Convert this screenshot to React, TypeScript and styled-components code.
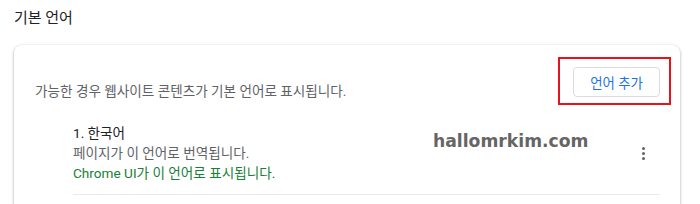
import React from 'react';
import styled, { createGlobalStyle } from 'styled-components';

const GlobalStyle = createGlobalStyle`
	html, body {
		margin: 0;
		padding: 0;
		background: #fff;
		font-family: Roboto, "Noto Sans CJK KR", sans-serif;
	}
`;

const Page = styled.div`
	width: 700px;
	height: 204px;
	overflow: hidden;
`;

const Heading = styled.h2`
	margin: 0;
	padding: 8px 14px 0;
	font-size: 15px;
	line-height: 20px;
	font-weight: 400;
	color: #202124;
`;

const Card = styled.section`
	position: relative;
	margin: 17px 0 0 14px;
	width: 666px;
	height: 200px;
	padding: 22px 20px 0 21px;
	box-sizing: border-box;
	background: #fff;
	border-radius: 8px;
	box-shadow: 0 1px 2px rgba(60, 64, 67, 0.3), 0 1px 3px 1px rgba(60, 64, 67, 0.15);
`;

const HeaderRow = styled.div`
	display: flex;
	align-items: flex-start;
	justify-content: space-between;
`;

const Description = styled.p`
	margin: 14px 0 0;
	font-size: 13.6px;
	line-height: 20px;
	color: #5f6368;
`;

const ButtonWrap = styled.div`
	position: relative;
`;

const Highlight = styled.div`
	position: absolute;
	top: -10px;
	left: -15px;
	right: -11px;
	bottom: -8px;
	border: 2px solid #e8121b;
	pointer-events: none;
`;

const AddButton = styled.button`
	width: 87px;
	height: 30px;
	border: 1px solid #dadce0;
	border-radius: 4px;
	background: #fff;
	color: #1a73e8;
	font-family: Roboto, "Noto Sans CJK KR", sans-serif;
	font-size: 13.4px;
	padding: 0;
`;

const LanguageItem = styled.div`
	display: flex;
	align-items: center;
	margin: 22px 0 0 38px;
	padding-bottom: 11px;
	border-bottom: 1px solid #e8eaed;
`;

const LanguageText = styled.div`
	flex: 1;
	font-size: 13.6px;
	line-height: 20px;
`;

const Line = styled.div<{ $tone?: 'main' | 'sub' | 'ok' }>`
	color: ${({ $tone }) =>
		$tone === 'ok' ? '#188038' : $tone === 'sub' ? '#5f6368' : '#202124'};
`;

const MoreButton = styled.div`
	width: 20px;
	display: flex;
	flex-direction: column;
	align-items: center;
	gap: 2px;
	margin-right: 7px;

	span {
		width: 3px;
		height: 3px;
		border-radius: 50%;
		background: #5f6368;
	}
`;

const Watermark = styled.div`
	position: absolute;
	left: 419px;
	top: 86px;
	font-family: "DejaVu Sans", sans-serif;
	font-weight: 700;
	font-size: 17.2px;
	color: #555;
	opacity: 0.9;
`;

const App = () => {
	return (
		<Page>
			<GlobalStyle />
			<Heading>기본 언어</Heading>
			<Card>
				<HeaderRow>
					<Description>가능한 경우 웹사이트 콘텐츠가 기본 언어로 표시됩니다.</Description>
					<ButtonWrap>
						<AddButton>언어 추가</AddButton>
						<Highlight />
					</ButtonWrap>
				</HeaderRow>
				<LanguageItem>
					<LanguageText>
						<Line $tone="main">1. 한국어</Line>
						<Line $tone="sub">페이지가 이 언어로 번역됩니다.</Line>
						<Line $tone="ok">Chrome UI가 이 언어로 표시됩니다.</Line>
					</LanguageText>
					<MoreButton>
						<span />
						<span />
						<span />
					</MoreButton>
				</LanguageItem>
				<Watermark>hallomrkim.com</Watermark>
			</Card>
		</Page>
	);
};

export default App;
